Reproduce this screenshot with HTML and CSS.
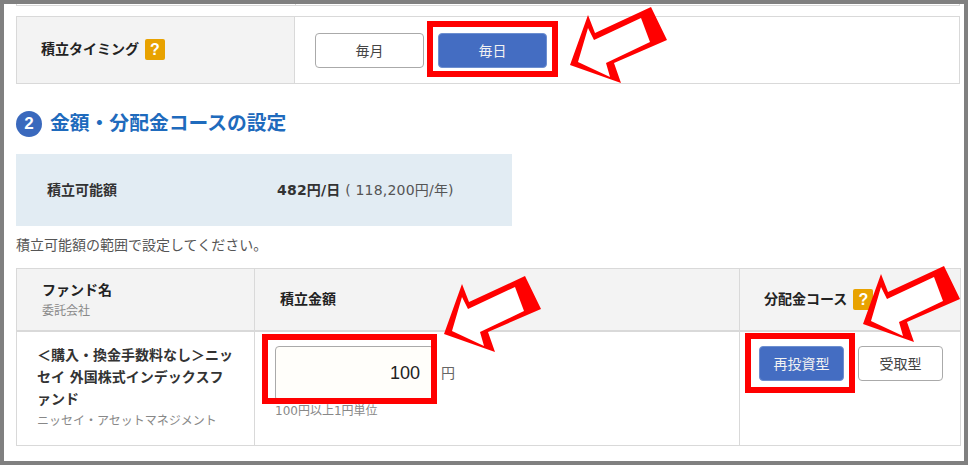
FILE: index.html
```html
<!DOCTYPE html>
<html lang="ja">
<head>
    <meta charset="UTF-8">
    <meta name="viewport" content="width=device-width, initial-scale=1.0">
    <title>金額・分配金コースの設定</title>
    <link rel="stylesheet" href="styles.css">
</head>
<body>

    <div class="frame">
        <!-- Bottom edge of the row above -->
        <div class="prev-row"><div class="prev-label"></div></div>

        <div class="timing">
            <div class="timing-label">積立タイミング<span class="help">?</span></div>
            <div class="timing-options">
                <button class="choice choice-month">毎月</button>
                <button class="choice choice-month selected">毎日</button>
            </div>
        </div>

        <h2 class="section-title"><span class="step">2</span><span class="title-text">金額・分配金コースの設定</span></h2>

        <div class="limit-box">
            <span class="limit-label">積立可能額</span>
            <span class="limit-value"><strong>482円/日</strong> ( 118,200円/年)</span>
        </div>

        <p class="note">積立可能額の範囲で設定してください。</p>

        <table class="fund-table">
            <tr>
                <th class="col-fund">ファンド名<small>委託会社</small></th>
                <th class="col-amount">積立金額</th>
                <th class="col-course"><span class="course-head">分配金コース<span class="help">?</span></span></th>
            </tr>
            <tr>
                <td class="fund-name">
                    <strong>＜購入・換金手数料なし＞ニッ<br>セイ 外国株式インデックスフ<br>ァンド</strong>
                    <small>ニッセイ・アセットマネジメント</small>
                </td>
                <td class="amount">
                    <div class="amount-row">
                        <input class="amount-input" type="text" value="100">
                        <span class="unit">円</span>
                    </div>
                    <small>100円以上1円単位</small>
                </td>
                <td class="course">
                    <div class="course-options">
                        <button class="choice choice-course selected">再投資型</button>
                        <button class="choice choice-course">受取型</button>
                    </div>
                </td>
            </tr>
        </table>
    </div>

    <!-- Red annotations pasted over the screenshot -->
    <svg class="marks" width="968" height="465" viewBox="0 0 968 465">
        <defs>
            <g id="arrow">
                <polygon fill="#ff0000" points="570,65 588,15 595,33 651,7 667,40 614,63 621,83"/>
                <polygon fill="#ffffff" points="578,62 588,28 594,40 641,18 650,42 606,63 610,77"/>
            </g>
        </defs>
        <rect class="mark-box" x="430" y="24" width="125" height="50"/>
        <rect class="mark-box" x="265" y="337" width="169" height="64"/>
        <rect class="mark-box" x="748" y="336" width="104" height="54"/>
        <use href="#arrow"/>
        <use href="#arrow" transform="translate(-126 269)"/>
        <use href="#arrow" transform="translate(293 259)"/>
    </svg>

</body>
</html>
```

FILE: styles.css
```css
body {
    margin: 0;
    font-family: "DejaVu Sans", "Noto Sans CJK JP", sans-serif;
    font-size: 14px;
    line-height: 20px;
    color: #333;
    position: relative;
}

.frame {
    box-sizing: border-box;
    width: 968px;
    height: 465px;
    padding: 0 4px 0 12px;
    background: #fff;
    border: 4px solid #808080;
    overflow: hidden;
}

.prev-row {
    height: 1px;
    border: 1px solid #d9d9d9;
    border-top: none;
}

.prev-label {
    width: 278px;
    height: 1px;
    border-right: 1px solid #d9d9d9;
}

/* Timing row */
.timing {
    display: grid;
    grid-template-columns: 278px 1fr;
    box-sizing: border-box;
    height: 68px;
    margin-top: 10px;
    border: 1px solid #d9d9d9;
}

.timing-label {
    display: flex;
    align-items: center;
    gap: 6px;
    padding-left: 24px;
    padding-bottom: 2px;
    background: #f3f3f3;
    border-right: 1px solid #d9d9d9;
    font-weight: bold;
    color: #222;
}

.timing-options {
    display: flex;
    align-items: center;
    gap: 14px;
    padding-left: 20px;
}

.help {
    display: inline-block;
    width: 20px;
    height: 21px;
    line-height: 21px;
    background: #e8a200;
    border-radius: 2px;
    color: #fff;
    font-family: "Liberation Sans", sans-serif;
    font-size: 16px;
    font-weight: bold;
    text-align: center;
}

.choice {
    box-sizing: border-box;
    height: 35px;
    padding: 0;
    background: #fff;
    border: 1px solid #aaa;
    border-radius: 4px;
    font-family: inherit;
    font-size: 14px;
    color: #444;
}

.choice.selected {
    background: #446dc2;
    border-color: #6d8fd0;
    color: #f2f2f2;
}

.choice-month {
    width: 109px;
}

.choice-course {
    width: 85px;
}

/* Section heading */
.section-title {
    display: flex;
    align-items: center;
    gap: 8px;
    height: 26px;
    margin: 27px 0 0;
    font-size: 19.8px;
    font-weight: bold;
    color: #1f6bbd;
}

.step {
    width: 26px;
    height: 26px;
    line-height: 26px;
    border-radius: 50%;
    background: #3a69bd;
    color: #fff;
    font-family: "Liberation Sans", sans-serif;
    font-size: 17px;
    text-align: center;
}

.limit-box {
    display: flex;
    align-items: center;
    box-sizing: border-box;
    width: 496px;
    height: 72px;
    margin-top: 17px;
    padding-left: 31px;
    background: #e2ecf3;
}

.limit-label {
    width: 230px;
    font-weight: bold;
}

.limit-value {
    color: #555;
    letter-spacing: 0.2px;
}

.limit-value strong {
    color: #333;
}

.note {
    margin: 9px 0 13px;
    line-height: 20px;
    font-size: 14px;
    color: #555;
}

/* Fund table */
.fund-table {
    width: 944px;
    table-layout: fixed;
    border-collapse: collapse;
}

.fund-table th,
.fund-table td {
    box-sizing: border-box;
    border: 1px solid #d9d9d9;
    padding: 0;
    text-align: left;
}

.fund-table th {
    height: 62px;
    background: #f3f3f3;
    border-bottom-width: 2px;
    color: #222;
}

.fund-table small {
    display: block;
    font-size: 12px;
    font-weight: normal;
    color: #888;
}

.fund-table .col-fund {
    width: 238px;
    padding: 2px 0 0 25px;
}

.fund-table .col-fund small {
    margin-top: 1px;
}

.fund-table .col-amount {
    width: 485px;
    padding-left: 25px;
}

.fund-table .col-course {
    width: 221px;
    padding-left: 24px;
}

.course-head {
    display: flex;
    align-items: center;
    gap: 6px;
}

.fund-table td {
    height: 115px;
    vertical-align: top;
}

.fund-table .fund-name {
    padding: 12px 0 0 20px;
    line-height: 22px;
}

.fund-table .amount {
    padding: 14px 0 0 20px;
}

.amount-row {
    display: flex;
    align-items: center;
    gap: 7px;
}

.amount-input {
    box-sizing: border-box;
    width: 159px;
    height: 55px;
    padding: 0 13px 0 0;
    background: #fffefa;
    border: 1px solid #aaa;
    border-radius: 4px;
    font-family: "Liberation Sans", sans-serif;
    font-size: 18px;
    color: #222;
    text-align: right;
}

.unit {
    font-size: 14px;
    color: #666;
}

.fund-table .course {
    padding: 14px 0 0 19px;
}

.course-options {
    display: flex;
    gap: 14px;
}

/* Annotations */
.marks {
    position: absolute;
    top: 0;
    left: 0;
    pointer-events: none;
}

.mark-box {
    fill: none;
    stroke: #ff0000;
    stroke-width: 6;
}
```
